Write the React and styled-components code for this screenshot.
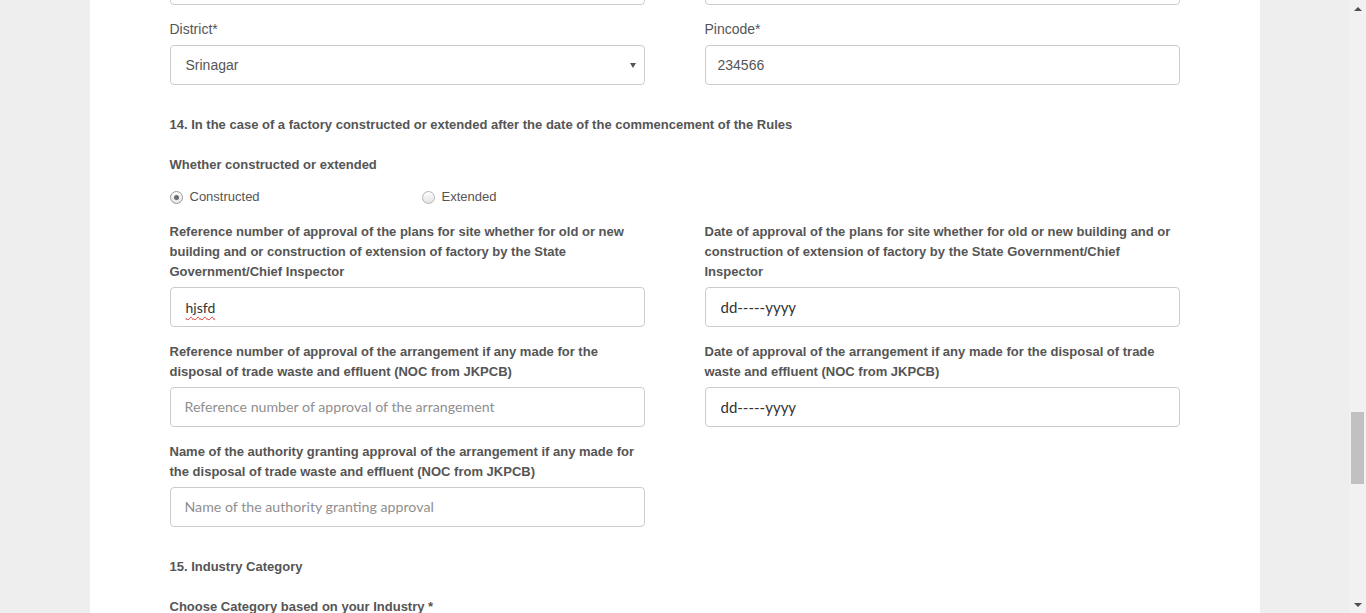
import styled, { createGlobalStyle } from 'styled-components'

const GlobalStyle = createGlobalStyle`
  html, body {
    margin: 0;
    height: 100%;
    overflow: hidden;
  }
  body {
    background: #eee;
    color: #555;
    font-family: 'Liberation Sans', Arial, sans-serif;
  }
`

const Screen = styled.div`
  display: flex;
  height: 100vh;
  overflow: hidden;
`
const Page = styled.div`
  display: flex;
  flex: 1;
  justify-content: center;
  overflow: hidden;
`
const Container = styled.div`
  background: #fff;
  box-sizing: border-box;
  padding: 0 80px;
  width: 1170px;
`
const Form = styled.form`
  margin-top: -35px;
`
const Grid = styled.div`
  column-gap: 60px;
  display: grid;
  grid-template-columns: 1fr 1fr;
`
const Group = styled.div`
  margin-bottom: 14px;
`
const Label = styled.label`
  display: block;
  font-size: ${(p) => (p.$plain ? '14px' : '13px')};
  font-weight: ${(p) => (p.$plain ? 400 : 700)};
  line-height: 20px;
  margin-bottom: ${(p) => (p.$plain ? '6px' : '5px')};
  padding-top: ${(p) => (p.$plain ? '0' : '1px')};
`
const Input = styled.input`
  border: 1px solid #ccc;
  border-radius: 4px;
  box-sizing: border-box;
  color: ${(p) => (p.$lato ? '#333' : '#555')};
  display: block;
  font-family: ${(p) => (p.$lato ? 'Lato, sans-serif' : "'Liberation Sans', Arial, sans-serif")};
  font-size: ${(p) => (p.$lato ? '15px' : '14px')};
  height: 40px;
  outline: none;
  padding: 0 ${(p) => p.$pad || '14px'};
  width: 100%;
  &::placeholder {
    color: #8f8f8f;
    font-family: Lato, sans-serif;
    font-size: 14.2px;
  }
`
const TextBox = styled.div`
  align-items: center;
  border: 1px solid #ccc;
  border-radius: 4px;
  box-sizing: border-box;
  color: #333;
  display: flex;
  font-family: Lato, sans-serif;
  font-size: 14px;
  height: 40px;
  padding: 0 15px;
`
const Misspelt = styled.span`
  text-decoration: underline wavy #e0302a;
  text-decoration-thickness: 1px;
  text-underline-offset: 3px;
`
const SelectBox = styled.div`
  align-items: center;
  border: 1px solid #ccc;
  border-radius: 4px;
  box-sizing: border-box;
  display: flex;
  font-size: 14px;
  height: 40px;
  justify-content: space-between;
  padding: 0 8px 0 15px;
`
const Caret = styled.span`
  border-left: 3px solid transparent;
  border-right: 3px solid transparent;
  border-top: 5px solid #555;
  height: 0;
  width: 0;
`
const Heading = styled.div`
  font-size: 13px;
  font-weight: 700;
  line-height: 20px;
  margin: ${(p) => (p.$top ? '15px' : '0')} 0 ${(p) => p.$gap || '19px'};
  padding-top: 1px;
`
const RadioRow = styled.div`
  display: grid;
  grid-template-columns: 252px auto;
  margin-bottom: 14px;
  padding-top: 1px;
`
const RadioOption = styled.label`
  align-items: center;
  display: flex;
  font-size: 13px;
  gap: 7px;
  line-height: 20px;
`
const RadioDot = styled.span`
  align-items: center;
  background: linear-gradient(#fdfdfd, #e4e4e4);
  border: 1px solid ${(p) => (p.$checked ? '#9a9a9a' : '#b5b5b5')};
  border-radius: 50%;
  box-sizing: border-box;
  display: flex;
  height: 13px;
  justify-content: center;
  width: 13px;
  &::after {
    background: ${(p) => (p.$checked ? '#6b6b6b' : 'transparent')};
    border-radius: 50%;
    content: '';
    height: 5px;
    width: 5px;
  }
`
const Scrollbar = styled.div`
  background: #f1f1f1;
  display: flex;
  flex-direction: column;
  width: 17px;
`
const ScrollButton = styled.div`
  align-items: center;
  display: flex;
  height: 17px;
  justify-content: center;
  &::before {
    border-left: 4px solid transparent;
    border-right: 4px solid transparent;
    ${(p) => (p.$down ? 'border-top' : 'border-bottom')}: 4px solid #505050;
    content: '';
    height: 0;
    width: 0;
  }
`
const Track = styled.div`
  flex: 1;
  padding-top: 395px;
`
const Thumb = styled.div`
  background: #c1c1c1;
  height: 72px;
  margin-left: 2px;
  width: 13px;
`

export default function App() {
  return (
    <>
      <GlobalStyle />
      <Screen>
        <Page>
          <Container>
            <Form>
              <Grid>
                <Group><Input readOnly /></Group>
                <Group><Input readOnly /></Group>
                <Group>
                  <Label $plain>District*</Label>
                  <SelectBox>Srinagar<Caret /></SelectBox>
                </Group>
                <Group>
                  <Label $plain>Pincode*</Label>
                  <Input defaultValue='234566' $pad='12px' />
                </Group>
              </Grid>

              <Heading $top>14. In the case of a factory constructed or extended after the date of the commencement of the Rules</Heading>
              <Heading $gap='11px'>Whether constructed or extended</Heading>
              <RadioRow>
                <RadioOption><RadioDot $checked />Constructed</RadioOption>
                <RadioOption><RadioDot />Extended</RadioOption>
              </RadioRow>

              <Grid>
                <Group>
                  <Label>Reference number of approval of the plans for site whether for old or new building and or construction of extension of factory by the State Government/Chief Inspector</Label>
                  <TextBox><Misspelt>hjsfd</Misspelt></TextBox>
                </Group>
                <Group>
                  <Label>Date of approval of the plans for site whether for old or new building and or construction of extension of factory by the State Government/Chief Inspector</Label>
                  <Input $lato $pad='15px' defaultValue='dd-----yyyy' />
                </Group>
                <Group>
                  <Label>Reference number of approval of the arrangement if any made for the disposal of trade waste and effluent (NOC from JKPCB)</Label>
                  <Input placeholder='Reference number of approval of the arrangement' />
                </Group>
                <Group>
                  <Label>Date of approval of the arrangement if any made for the disposal of trade waste and effluent (NOC from JKPCB)</Label>
                  <Input $lato $pad='15px' defaultValue='dd-----yyyy' />
                </Group>
                <Group>
                  <Label>Name of the authority granting approval of the arrangement if any made for the disposal of trade waste and effluent (NOC from JKPCB)</Label>
                  <Input placeholder='Name of the authority granting approval' />
                </Group>
              </Grid>

              <Heading $top>15. Industry Category</Heading>
              <Heading>Choose Category based on your Industry *</Heading>
            </Form>
          </Container>
        </Page>
        <Scrollbar>
          <ScrollButton />
          <Track><Thumb /></Track>
          <ScrollButton $down />
        </Scrollbar>
      </Screen>
    </>
  )
}
